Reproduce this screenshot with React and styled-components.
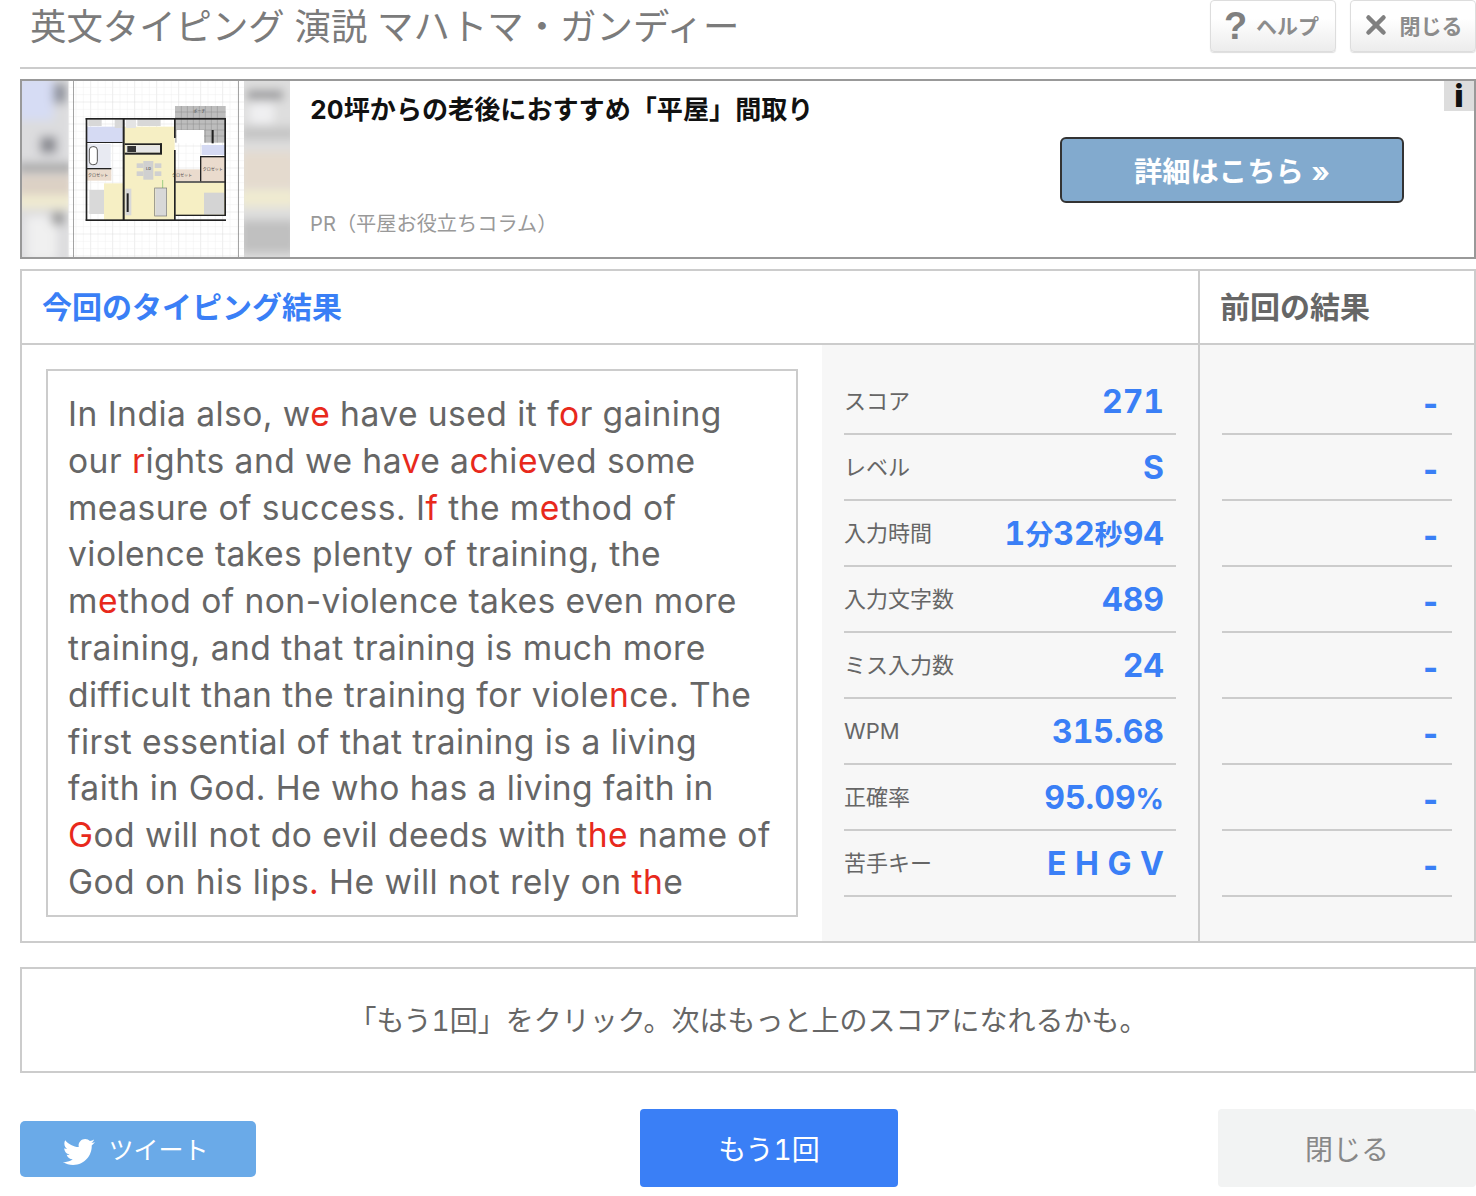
import React from 'react';
import styled, { createGlobalStyle } from 'styled-components';
import { FaTwitter } from 'react-icons/fa';
import { X } from 'lucide-react';

const JP = `Inter, "Noto Sans CJK JP", sans-serif`;

const GlobalStyle = createGlobalStyle`
  html, body { margin: 0; padding: 0; background: #fff; }
  body { font-family: ${JP}; font-feature-settings: "tnum"; overflow: hidden; }
  * { box-sizing: border-box; }
`;

const Page = styled.div`
  width: 1476px;
  height: 1196px;
  padding-left: 20px;
`;

const Header = styled.header`
  display: flex;
  justify-content: space-between;
  align-items: flex-start;
  height: 69px;
  border-bottom: 2px solid #ccc;
`;

const Title = styled.h1`
  margin: 0 0 0 10px;
  font-size: 36.4px;
  line-height: 54px;
  font-weight: 400;
  color: #7b7b7b;
`;

const HeaderButtons = styled.div`
  display: flex;
  gap: 14px;
`;

const HeaderButton = styled.button`
  display: flex;
  align-items: center;
  justify-content: center;
  gap: 9px;
  width: 126px;
  height: 52px;
  padding: 0 3px 2px 0;
  border: 1px solid #ddd;
  border-radius: 4px;
  background: linear-gradient(#fff 35%, #ececec);
  color: #8c8c8c;
  font-family: ${JP};
  font-size: 21px;
  font-weight: 700;
  box-shadow: 0 1px 1px #ddd;
`;

const HelpIcon = styled.span`
  margin-top: 2px;
  font: 700 38px/1 "Liberation Sans", sans-serif;
  color: #808080;
`;

const Ad = styled.section`
  position: relative;
  display: flex;
  height: 180px;
  margin-top: 10px;
  border: 2px solid #999;
`;

const AdImage = styled.svg`
  display: block;
  flex: none;
  width: 268px;
  height: 176px;
`;

const AdCopy = styled.div`
  flex: 1;
  display: flex;
  flex-direction: column;
  justify-content: space-between;
  padding: 12px 0 18px 20px;
`;

const AdTitle = styled.div`
  font-size: 26.1px;
  line-height: 34px;
  font-weight: 700;
  color: #111;
`;

const AdSource = styled.div`
  font-size: 20.2px;
  line-height: 30px;
  color: #999;
`;

const AdAction = styled.a`
  flex: none;
  align-self: center;
  display: flex;
  align-items: center;
  justify-content: center;
  width: 344px;
  height: 66px;
  margin: 2px 70px 0 0;
  padding-bottom: 2px;
  border: 2px solid #333;
  border-radius: 6px;
  background: #82aace;
  color: #fff;
  font-size: 28.3px;
  font-weight: 700;
`;

const InfoMark = styled.span`
  position: absolute;
  top: 0;
  right: 0;
  width: 30px;
  height: 30px;
  background: #ddd;
  color: #111;
  font: 900 30px/30px Inter, sans-serif;
  text-align: center;
`;

const Results = styled.section`
  display: grid;
  grid-template-columns: 1fr 276px;
  height: 674px;
  margin-top: 10px;
  border: 2px solid #ccc;
`;

const PanelHead = styled.div`
  height: 74px;
  padding-left: 20px;
  border-bottom: 2px solid #ccc;
  border-left: ${(p) => (p.$side ? '2px solid #ccc' : 'none')};
  font-size: 30px;
  line-height: 72px;
  font-weight: 700;
  color: ${(p) => (p.$side ? '#666' : '#3a7ff6')};
`;

const CurrentBody = styled.div`
  display: grid;
  grid-template-columns: 800px 376px;
  height: 596px;
`;

const PassagePane = styled.div`
  padding: 24px;
`;

const Passage = styled.div`
  height: 548px;
  padding: 20px 0 0 20px;
  border: 2px solid #ccc;
  font-size: 33.6px;
  line-height: 46.8px;
  letter-spacing: 0.45px;
  font-feature-settings: normal;
  color: #666;
`;

const PassageLine = styled.div`
  white-space: nowrap;
`;

const Miss = styled.span`
  color: #e8291c;
`;

const StatsPane = styled.div`
  height: 596px;
  padding: 24px 22px 0;
  background: #f7f7f7;
  border-left: ${(p) => (p.$side ? '2px solid #ccc' : 'none')};
`;

const StatRow = styled.div`
  display: flex;
  justify-content: space-between;
  align-items: center;
  height: 66px;
  padding: 0 12px 0 0;
  border-bottom: 2px solid #ccc;
`;

const StatLabel = styled.span`
  font-size: 22px;
  line-height: 1;
  color: #666;
`;

const StatValue = styled.span`
  padding-top: 2px;
  font-size: 32px;
  line-height: 1;
  font-weight: 700;
  color: #3a7ff6;
`;

const StatUnit = styled.span`
  font-size: 28px;
`;

const EmptyValue = styled(StatValue)`
  margin-right: -1px;
  padding-top: 6px;
  font-weight: 800;
`;

const Message = styled.div`
  display: flex;
  align-items: center;
  justify-content: center;
  height: 106px;
  margin-top: 24px;
  padding-bottom: 2px;
  border: 2px solid #ccc;
  font-size: 28px;
  color: #666;
`;

const Actions = styled.div`
  display: grid;
  grid-template-columns: 620px 258px 1fr;
  align-items: center;
  margin-top: 36px;
`;

const TweetButton = styled.a`
  display: flex;
  align-items: center;
  justify-content: center;
  gap: 13px;
  width: 236px;
  height: 56px;
  margin-top: 2px;
  padding: 0 4px 2px 0;
  border-radius: 5px;
  background: #6aaae8;
  color: #fff;
  font-size: 25px;

  svg {
    margin-top: 8px;
  }
`;

const ActionButton = styled.button`
  justify-self: ${(p) => (p.$primary ? 'start' : 'end')};
  width: 258px;
  height: 78px;
  border: 0;
  border-radius: 4px;
  background: ${(p) => (p.$primary ? '#3a7ff6' : '#f2f3f3')};
  color: ${(p) => (p.$primary ? '#fff' : '#888')};
  font-family: ${JP};
  font-feature-settings: "tnum";
  font-size: 28px;
`;

const lines = [
  ['In India also, w', ['e'], ' have used it f', ['o'], 'r gaining'],
  ['our ', ['r'], 'ights and we ha', ['v'], 'e a', ['c'], 'hi', ['e'], 'ved some'],
  ['measure of success. I', ['f'], ' the m', ['e'], 'thod of'],
  ['violence takes plenty of training, the'],
  ['m', ['e'], 'thod of non-violence takes even more'],
  ['training, and that training is much more'],
  ['difficult than the training for viole', ['n'], 'ce. The'],
  ['first essential of that training is a living'],
  ['faith in God. He who has a living faith in'],
  [['G'], 'od will not do evil deeds with t', ['he'], ' name of'],
  ['God on his lips', ['.'], ' He will not rely on ', ['th'], 'e'],
];

const stats = [
  ['スコア', ['271']],
  ['レベル', ['S']],
  ['入力時間', ['1', ['分'], '32', ['秒'], '94']],
  ['入力文字数', ['489']],
  ['ミス入力数', ['24']],
  ['WPM', ['315.68']],
  ['正確率', ['95.09', ['%']]],
  ['苦手キー', ['E H G V']],
];

// rects of the floor plan, in the coordinates of the zoomed ad picture
const rooms = [
  ['#f6efc4', 312, 140, 152, 280],
  ['#f6efc4', 466, 308, 152, 100],
  ['#f6efc4', 252, 310, 58, 110],
  ['#d5daf3', 200, 140, 110, 48],
  ['#d5daf3', 545, 195, 70, 30],
  ['#e8eaf2', 200, 192, 72, 72],
  ['#eadbcd', 542, 230, 74, 76],
  ['#eadbcd', 198, 268, 76, 34],
  ['#eadbcd', 466, 268, 76, 36],
  ['#d9d9d9', 208, 330, 44, 72],
  ['#d8d8d8', 406, 324, 34, 84],
  ['#d8d8d8', 316, 326, 18, 80],
  ['#d0d0d0', 370, 243, 30, 56],
  ['#d0d0d0', 350, 250, 20, 14],
  ['#d0d0d0', 350, 274, 20, 14],
  ['#d0d0d0', 404, 250, 20, 14],
  ['#d0d0d0', 404, 274, 20, 14],
  ['#d8d8d8', 352, 114, 70, 24],
  ['#d8d8d8', 205, 118, 40, 20],
  ['#d8d8d8', 284, 118, 24, 26],
  ['#e4e4e4', 318, 118, 30, 26],
  ['#d4d4d4', 552, 338, 60, 66],
  ['#bdbdbd', 465, 78, 152, 110],
  ['#e6e6e6', 318, 196, 102, 22],
];

const walls = [
  [197, 114, 421, 5],
  [197, 114, 5, 308],
  [197, 418, 421, 5],
  [613, 114, 5, 292],
  [466, 404, 152, 4],
  [308, 114, 6, 308],
  [462, 114, 5, 60],
  [462, 210, 5, 210],
  [314, 190, 112, 5],
  [314, 218, 112, 6],
  [420, 190, 6, 32],
  [198, 264, 76, 4],
  [466, 304, 150, 4],
  [540, 228, 4, 76],
  [540, 228, 76, 4],
  [198, 186, 110, 3],
  [575, 150, 6, 40],
];

const gridColumns = Array.from({ length: 25 }, (_, i) => 146 + i * 22);
const gridRows = Array.from({ length: 25 }, (_, i) => i * 22);

const AdPicture = () => (
  <AdImage viewBox="6 3 804 528" preserveAspectRatio="none" aria-hidden="true">
    <defs>
      <filter id="blur" x="-20%" y="-20%" width="140%" height="140%">
        <feGaussianBlur stdDeviation="14" />
      </filter>
      <clipPath id="leftside"><rect x="6" y="3" width="139" height="528" /></clipPath>
      <clipPath id="rightside"><rect x="672" y="3" width="138" height="528" /></clipPath>
    </defs>
    <rect x="6" y="3" width="804" height="528" fill="#fff" />
    <g strokeWidth="1.5">
      {gridColumns.map((x, i) => (
        <line key={x} x1={x} y1="3" x2={x} y2="531" stroke={i % 3 === 0 ? '#dcdcdc' : '#efefef'} />
      ))}
      {gridRows.map((y, i) => (
        <line key={y} x1="145" y1={y} x2="672" y2={y} stroke={i % 3 === 0 ? '#dcdcdc' : '#efefef'} />
      ))}
    </g>
    <g clipPath="url(#leftside)">
      <g filter="url(#blur)">
        <rect x="-30" y="-30" width="190" height="600" fill="#dcdcde" />
        <rect x="-10" y="-10" width="110" height="130" fill="#d6dcf4" />
        <rect x="100" y="10" width="40" height="60" fill="#8f939c" />
        <rect x="60" y="170" width="50" height="50" fill="#8a8b92" />
        <rect x="-10" y="250" width="170" height="26" fill="#a0a0a0" />
        <rect x="-10" y="285" width="170" height="60" fill="#dcd0c4" />
        <rect x="-10" y="345" width="170" height="40" fill="#f0ebd0" />
        <rect x="20" y="410" width="90" height="130" fill="#f0f0f0" />
        <rect x="95" y="395" width="40" height="40" fill="#9a9a9a" />
      </g>
    </g>
    <rect x="159" y="3" width="2" height="528" fill="#777" />
    <rect x="655" y="3" width="2" height="528" fill="#777" />
    {rooms.map(([fill, x, y, w, h]) => (
      <rect key={`${x}-${y}`} x={x} y={y} width={w} height={h} fill={fill} />
    ))}
    <g stroke="#8c8c8c" strokeWidth="1.5">
      {[484, 502, 520, 538, 556, 574, 592].map((x) => (
        <line key={x} x1={x} y1="78" x2={x} y2="188" />
      ))}
      {[96, 114, 132, 150, 168].map((y) => (
        <line key={y} x1="465" y1={y} x2="617" y2={y} />
      ))}
    </g>
    <rect x="470" y="150" width="82" height="40" fill="#fff" />
    <rect x="208" y="200" width="24" height="54" rx="10" fill="#fff" stroke="#555" strokeWidth="3" />
    <rect x="404" y="324" width="36" height="84" fill="none" stroke="#777" strokeWidth="2" />
    <rect x="320" y="340" width="6" height="56" fill="#222" />
    <rect x="322" y="198" width="26" height="18" fill="#333" />
    <g fill="#222">
      {walls.map(([x, y, w, h]) => (
        <rect key={`${x}-${y}-${w}`} x={x} y={y} width={w} height={h} />
      ))}
    </g>
    <g fontSize="12" fill="#333" fontFamily="Noto Sans CJK JP, sans-serif">
      <text x="204" y="292">クロゼット</text>
      <text x="456" y="292">クロゼット</text>
      <text x="548" y="272">クロゼット</text>
      <text x="520" y="100">ポーチ</text>
      <text x="378" y="270">LD</text>
    </g>
    <line x1="428" y1="300" x2="428" y2="324" stroke="#4a4" strokeWidth="1.5" />
    <g clipPath="url(#rightside)">
      <g filter="url(#blur)">
        <rect x="650" y="-30" width="190" height="600" fill="#dedede" />
        <rect x="680" y="30" width="110" height="30" fill="#9a9a9c" />
        <rect x="690" y="70" width="70" height="60" fill="#f0f0f2" />
        <rect x="660" y="140" width="170" height="40" fill="#c4c4c4" />
        <rect x="660" y="215" width="170" height="110" fill="#e4dace" />
        <rect x="660" y="330" width="170" height="50" fill="#f0ebd0" />
        <rect x="660" y="420" width="170" height="100" fill="#c0c0c0" />
      </g>
    </g>
  </AdImage>
);

const App = () => (
  <Page>
    <GlobalStyle />
    <Header>
      <Title>英文タイピング 演説 マハトマ・ガンディー</Title>
      <HeaderButtons>
        <HeaderButton><HelpIcon>?</HelpIcon>ヘルプ</HeaderButton>
        <HeaderButton><X size={30} strokeWidth={3.6} color="#808080" />閉じる</HeaderButton>
      </HeaderButtons>
    </Header>

    <Ad>
      <AdPicture />
      <AdCopy>
        <AdTitle>20坪からの老後におすすめ「平屋」間取り</AdTitle>
        <AdSource>PR（平屋お役立ちコラム）</AdSource>
      </AdCopy>
      <AdAction>詳細はこちら »</AdAction>
      <InfoMark>i</InfoMark>
    </Ad>

    <Results>
      <div>
        <PanelHead>今回のタイピング結果</PanelHead>
        <CurrentBody>
          <PassagePane>
            <Passage>
              {lines.map((line, i) => (
                <PassageLine key={i}>
                  {line.map((part, j) =>
                    Array.isArray(part) ? <Miss key={j}>{part[0]}</Miss> : part
                  )}
                </PassageLine>
              ))}
            </Passage>
          </PassagePane>
          <StatsPane>
            {stats.map(([label, value]) => (
              <StatRow key={label}>
                <StatLabel>{label}</StatLabel>
                <StatValue>
                  {value.map((part, j) =>
                    Array.isArray(part) ? <StatUnit key={j}>{part[0]}</StatUnit> : part
                  )}
                </StatValue>
              </StatRow>
            ))}
          </StatsPane>
        </CurrentBody>
      </div>
      <div>
        <PanelHead $side>前回の結果</PanelHead>
        <StatsPane $side>
          {stats.map(([label]) => (
            <StatRow key={label}>
              <span />
              <EmptyValue>-</EmptyValue>
            </StatRow>
          ))}
        </StatsPane>
      </div>
    </Results>

    <Message>「もう1回」をクリック。次はもっと上のスコアになれるかも。</Message>

    <Actions>
      <TweetButton><FaTwitter size={32} />ツイート</TweetButton>
      <ActionButton $primary>もう1回</ActionButton>
      <ActionButton>閉じる</ActionButton>
    </Actions>
  </Page>
);

export default App;
